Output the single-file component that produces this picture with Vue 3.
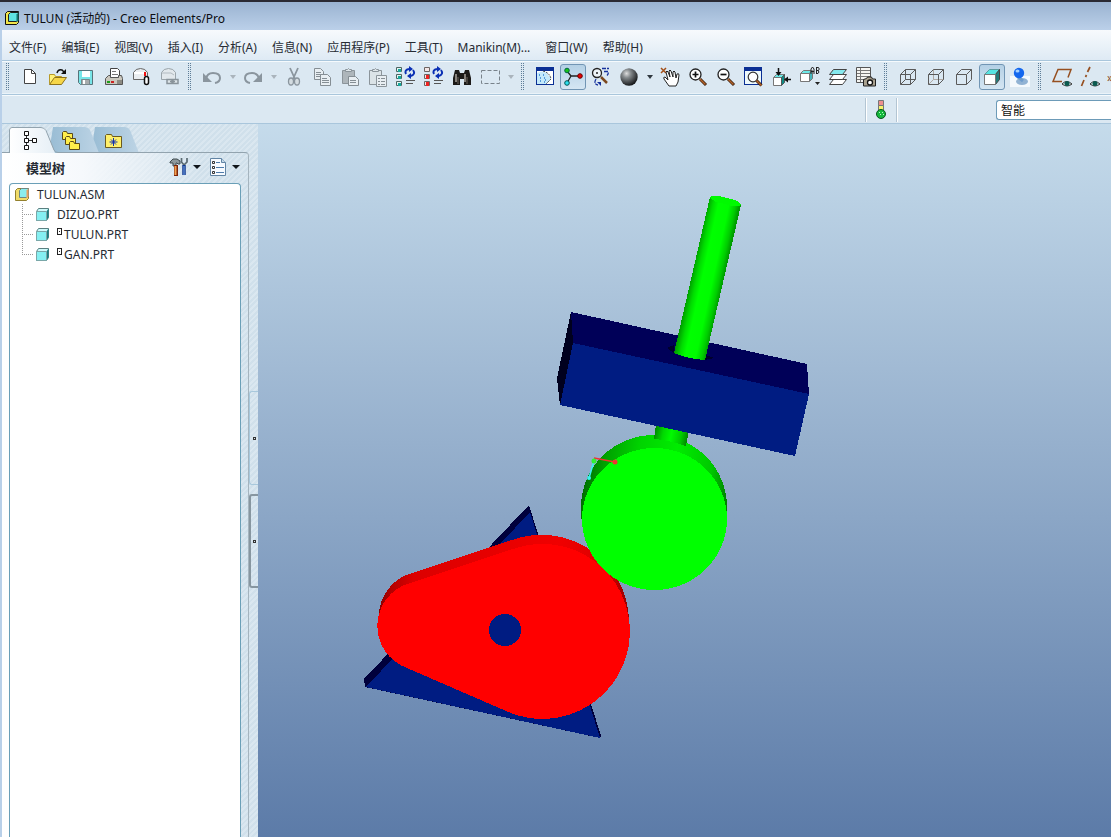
<script setup>
import { ref } from 'vue'

const menus = ['文件(F)', '编辑(E)', '视图(V)', '插入(I)', '分析(A)', '信息(N)', '应用程序(P)', '工具(T)', 'Manikin(M)...', '窗口(W)', '帮助(H)']

const cubeEdges = '<path d="M2.5 7.5h10v10h-10zM7.5 2.5h10v10M2.5 7.5l5-5M12.5 7.5l5-5M12.5 17.5l5-5" fill="none" stroke="#5a5a5a"/>'
const lens = '<circle cx="7.5" cy="7.5" r="5.5" fill="#fff" stroke="#222" stroke-width="1.3"/><path d="M12 12l6 6" stroke="#3a1c08" stroke-width="3"/><path d="M12 12l5.500 5.500" stroke="#b4642c" stroke-width="1.500"/>'
const eye = '<path d="M10 17q4.500-5 10 0q-5 4-10 0z" fill="#d8e8e8" stroke="#333"/><circle cx="15" cy="16.500" r="2.500" fill="#0c5a50"/>'
const regenArrows = '<path d="M10 7q-2-4 3-5M17 3q3 4-2 6" fill="none" stroke="#0a2fb4" stroke-width="2"/><path d="M13-1v6l4-3zM15 6v6l-4-3z" fill="#0a2fb4"/><path d="M10 13.500h9M10 16.500h7" stroke="#555"/>'
const clip = '<path d="M2.500 3.500h12v13h-12z" fill="#aeb6bb" stroke="#8b949a"/><path d="M5.500 4.500v-2h2q1-2 2 0h2v2z" fill="#dfe6ea" stroke="#8b949a"/>'

const icons = {
  new: '<path d="M4.500 2.500h7l4 4v10h-11z" fill="#fff" stroke="#444"/><path d="M11.500 2.500v4h4" fill="none" stroke="#444"/>',
  open: '<path d="M1.500 16.500v-9h5l1 2h6v7z" fill="#fff27a" stroke="#b89a28"/><path d="M1.500 17.500l5-7h12l-5 7z" fill="#f6d648" stroke="#8d721b"/><path d="M9 6q1-4 5-3l2 2" fill="none" stroke="#111" stroke-width="1.500"/><path d="M18 2v5h-5z" fill="#111"/>',
  save: '<path d="M2.500 3.500h14v14h-12l-2-2z" fill="#78e5e8" stroke="#56737a"/><path d="M6 4h8v6h-8z" fill="#fff"/><path d="M5.500 12.500h8v5h-8z" fill="#a7abac" stroke="#78888c"/><path d="M7 13h2v4h-2z" fill="#fff"/>',
  print: '<path d="M6.500 10.500v-9h7l2 2v7z" fill="#fff" stroke="#444"/><path d="M8 4.500h4M8 7.500h6" stroke="#777"/><path d="M1.500 11.500l3-3h2v2h8v-2h3l1 3v6h-17z" fill="#cac7bd" stroke="#555"/><path d="M3 15h3" stroke="#1ca01c" stroke-width="2"/><path d="M7 15h3" stroke="#c22" stroke-width="2"/><path d="M13 13h5v4h-5z" fill="#8c8a82"/>',
  mail: '<path d="M1.500 12.500v-7q2-4 7-4q5 0 7 4v7z" fill="#e9edf0" stroke="#666"/><path d="M2 6h12" stroke="#fff" stroke-width="2"/><path d="M13 5v4" stroke="#e11" stroke-width="2"/><rect x="12.500" y="9.500" width="4" height="8" rx="2" fill="#fff" stroke="#111" stroke-width="1.500"/>',
  link: '<path d="M1.500 12.500v-7q2-4 7-4q5 0 7 4v7z" fill="#e2e8ec" stroke="#9aa4aa"/><path d="M2 6h9l3 2" fill="none" stroke="#b2bac0"/><path d="M7 12.500h5v4h-5zM13 12.500h5v4h-5zM10 14.500h5" fill="#dde4e8" stroke="#89939a" stroke-width="1.500"/>',
  undo: '<path d="M4 12q1-6 7-6q7 0 7 5q0 4-5 5" fill="none" stroke="#8a959e" stroke-width="2"/><path d="M1 6v9h9z" fill="#8a959e"/>',
  redo: '<path d="M16 12q-1-6-7-6q-7 0-7 5q0 4 5 5" fill="none" stroke="#8a959e" stroke-width="2"/><path d="M19 6v9h-9z" fill="#8a959e"/>',
  cut: '<path d="M6 1l5 11M14 1l-5 11" stroke="#8a959e" stroke-width="1.800"/><ellipse cx="7" cy="14.500" rx="2.500" ry="3.500" fill="#d4dce1" stroke="#8a959e" stroke-width="1.300"/><ellipse cx="13" cy="14.500" rx="2.500" ry="3.500" fill="#d4dce1" stroke="#8a959e" stroke-width="1.300"/>',
  copy: '<path d="M2.500 1.500h6l3 3v8h-9z" fill="#e8eef2" stroke="#858e94"/><path d="M4 5.500h5M4 7.500h5M4 9.500h4" stroke="#858e94"/><path d="M8.500 7.500h7l3 3v8h-10z" fill="#e8eef2" stroke="#858e94"/><path d="M10 11.500h5M10 13.500h7M10 15.500h7" stroke="#858e94"/>',
  paste: clip + '<path d="M8.500 9.500h7l3 3v6h-10z" fill="#e8eef2" stroke="#858e94"/><path d="M10 13.500h6M10 15.500h6" stroke="#858e94"/>',
  pasteSpecial: '<path d="M1.500 3.500h12v14h-12z" fill="#dbe3e7" stroke="#8b949a"/><path d="M4.500 4.500v-2h2q1-2 2 0h2v2z" fill="#dfe6ea" stroke="#8b949a"/><path d="M8.500 8.500h10v11h-10z" fill="#e8eef2" stroke="#8b949a"/><path d="M10 11.500h2M10 14.500h2M10 17.500h2M13 11.500h4M13 14.500h4M13 17.500h4" stroke="#858e94"/>',
  regen: '<path d="M.5.500h5v4h-5zM.5 7.500h5v4h-5zM.5 14.500h5v4h-5z" fill="#e5f4f2" stroke="#4c6462"/><path d="M2 2h3v3h-3zM2 9h3v3h-3zM2 16h3v3h-3z" fill="#16a79b"/>' + regenArrows,
  regenRed: '<path d="M.5.500h5v4h-5zM.5 7.500h5v4h-5zM.5 14.500h5v4h-5z" fill="#f4e5e5" stroke="#6c6462"/><path d="M2 8h3v4h-3zM2 15h3v4h-3z" fill="#e22"/>' + regenArrows,
  find: '<path d="M3 3h4l1 3h4l1-3h4l2 8v7h-7v-6h-4v6h-7v-7z" fill="#1c1a18"/><path d="M4 7v8M13 7v8" stroke="#a8a29a" stroke-width="1.500"/><path d="M6 10v7M15 10v7" stroke="#6d655c"/>',
  box: '<rect x="1.500" y="3.500" width="18" height="13" fill="none" stroke="#78828a" stroke-dasharray="4 2"/>',
  repaint: '<path d="M1 0h18v18h-18z" fill="#0b2f94"/><path d="M2 4h16v13h-16z" fill="#fff"/><path d="M2 6q6-3 10 0l4 6-5 5h-9z" fill="#c4e9fb"/><path d="M4 8h1m3 0h1m-4 3h1m3 0h1m-5 3h1m4-1h1m-2 2h1" stroke="#2f80d0" stroke-width="1.300"/><path d="M8 4q7 2 8 8l-5 5" fill="none" stroke="#444" stroke-dasharray="2 1"/>',
  csys: '<path d="M4 4l4 5h9M8 9l-4 7" fill="none" stroke="#222" stroke-width="1.300"/><circle cx="4" cy="3.500" r="2.300" fill="#18c218" stroke="#064"/><circle cx="17" cy="9" r="2.300" fill="#e80000" stroke="#600"/><circle cx="4" cy="16" r="2.300" fill="#2ee0ee" stroke="#055"/>',
  orient: '<circle cx="6" cy="6" r="4.500" fill="#eef4f8" stroke="#222" stroke-width="1.300"/><circle cx="6" cy="6" r="1" fill="#222"/><path d="M10 10l6 6" stroke="#7d4a20" stroke-width="2.500"/><path d="M11 1.500h7M13 4.500h4q1 2-1 4M5 12q-3 5 2 6" fill="none" stroke="#15309c" stroke-width="1.300" stroke-dasharray="4 1"/><path d="M6 15h4v4z" fill="#15309c"/>',
  ball: '<defs><radialGradient id="ballShade" cx=".36" cy=".3" r=".7"><stop offset="0" stop-color="#ddd"/><stop offset=".35" stop-color="#858a8d"/><stop offset="1" stop-color="#191b1d"/></radialGradient></defs><circle cx="10" cy="10" r="8.700" fill="url(#ballShade)"/>',
  hand: '<path d="M1 1l5 5M6 1l-5 5" stroke="#a34f18" stroke-width="1.500"/><path d="M9 19l-5-7q-1-2 1-2l3 3-2-8q1-2 2 0l2 5-1-6q1-2 2 0l2 6v-5q1-2 2 0l1 6 1-4q2-1 2 1l-1 7-2 4z" fill="#fff" stroke="#222"/>',
  zoomIn: lens + '<path d="M7.500 4.500v6M4.500 7.500h6" stroke="#111" stroke-width="1.700"/>',
  zoomOut: lens + '<path d="M4.500 7.500h6" stroke="#111" stroke-width="1.700"/>',
  refit: '<path d="M0 0h18v18h-18z" fill="#0b2f94"/><path d="M1 4h16v13h-16z" fill="#eef9fb"/><circle cx="9" cy="10" r="4.800" fill="#fff" stroke="#333" stroke-width="1.200"/><path d="M12.500 13.500l5 5" stroke="#3a1c08" stroke-width="3"/><path d="M12.500 13.500l5 5" stroke="#b4642c" stroke-width="1.500"/>',
  reorient: '<path d="M1.500 10.500l3-3h8l-3 3z" fill="#6ce9e8" stroke="#777"/><path d="M1.500 10.500h8v8h-8z" fill="#fff" stroke="#777"/><path d="M9.500 10.500l3-3v8l-3 3z" fill="#0d8b85" stroke="#555"/><path d="M6.500 1v6M13 12.500h6" stroke="#111" stroke-width="1.500"/><path d="M3.500 5h6l-3 4zM16 9.500v6l-4-3z" fill="#111"/>',
  views: '<path d="M.5 6.500l3-3h8l-2 3z" fill="#6ce9e8" stroke="#777"/><path d="M.5 6.500h9v8h-9z" fill="#fff" stroke="#777"/><path d="M9.500 6.500l3-3v8l-3 3z" fill="#47b7bd" stroke="#777"/><path d="M11 7v-5l1.500-2 1.500 2v5M11 4.500h3M16.500 0v7M16.500.5h2q1.500 1.500 0 3h-2M18 3.500q2 1.500 0 3h-2" fill="none" stroke="#222"/><path d="M15 15h5l-2.500 3z" fill="#222"/>',
  layers: '<path d="M1.500 17.500l4-5h13l-4 5z" fill="#fff" stroke="#444"/><path d="M1.500 12.500l4-5h13l-4 5z" fill="#fff" stroke="#444"/><path d="M1.500 7.500l4-5h13l-4 5z" fill="#85e9ee" stroke="#444"/>',
  viewMgr: '<path d="M.5.500h14v15h-14z" fill="#f5f5f2" stroke="#555"/><path d="M1 3.500h13M1 6.500h13M1 9.500h13M1 12.500h13M4.500 1v14" stroke="#777"/><path d="M7.500 12.500l3-1 1-1.500h4l1 2h3v7h-12z" fill="#aaa290" stroke="#222"/><circle cx="14" cy="15.500" r="2.500" fill="#fff" stroke="#111" stroke-width="1.300"/>',
  wire: cubeEdges + '<path d="M7.500 2.500v10h10M7.500 12.500l-5 5" fill="none" stroke="#5a5a5a"/>',
  hidden: '<path d="M7.500 2.500v10h10M7.500 12.500l-5 5" fill="none" stroke="#b0aaa5"/>' + cubeEdges,
  noHidden: cubeEdges,
  shaded: '<path d="M2.500 7.500l5-5h10l-4 5z" fill="#57e4e2" stroke="#5d9da0"/><path d="M13.500 7.500l4-5v10l-4 5z" fill="#237b78" stroke="#444"/><path d="M2.500 7.500h11v10h-11z" fill="#fff" stroke="#777"/>',
  real: '<path d="M0 9h20v11h-20z" fill="#f4f9fd"/><ellipse cx="12" cy="14.500" rx="6" ry="3.500" fill="#92b3d4"/><path d="M8 10l5 4" stroke="#6f9ccc" stroke-width="3"/><circle cx="9" cy="6" r="5.200" fill="#1467ee"/><ellipse cx="7.500" cy="4" rx="2" ry="1.500" fill="#a4d0ff"/>',
  plane: '<path d="M10 14.500h-9l5-12h13l-3 8" fill="none" stroke="#964f20" stroke-width="1.500"/>' + eye,
  axis: '<path d="M10 0l-2.500 5M6.500 8l-1 2M4 13l-2.500 6" stroke="#964f20" stroke-width="1.700"/>' + eye
}

const groups = [
  [['new', '新建'], ['open', '打开'], ['save', '保存'], ['print', '打印'], ['mail', '发送附件'], ['link', '发送链接', 1]],
  [['undo', '撤消', 1, 1], ['redo', '重做', 1, 1], ['cut', '剪切', 1], ['copy', '复制', 1], ['paste', '粘贴', 1], ['pasteSpecial', '选择性粘贴', 1], ['regen', '再生'], ['regenRed', '再生管理器'], ['find', '查找'], ['box', '选取框', 0, 1]],
  [['repaint', '重画'], ['csys', '旋转中心', 0, 0, 1], ['orient', '定向模式'], ['ball', '外观库', 0, 2], ['hand', '平移'], ['zoomIn', '放大'], ['zoomOut', '缩小'], ['refit', '重新调整'], ['reorient', '重定向'], ['views', '已保存视图'], ['layers', '层'], ['viewMgr', '视图管理器']],
  [['wire', '线框'], ['hidden', '隐藏线'], ['noHidden', '消隐'], ['shaded', '着色', 0, 0, 1], ['real', '增强真实感']],
  [['plane', '平面显示'], ['axis', '轴显示']]
]

const parts = [
  { name: 'DIZUO.PRT', packed: false },
  { name: 'TULUN.PRT', packed: true },
  { name: 'GAN.PRT', packed: true }
]
const filter = ref('智能')
</script>

<template>
  <div class="window">
    <header class="title-bar">
      <svg width="16" height="16" viewBox="0 0 16 16" aria-hidden="true">
        <path d="M1.500 3.500l2-2h11v11l-2 2h-11z" fill="#f3e64a" stroke="#111" />
        <path d="M4.500 4.500l2-2h8v7l-2 2h-8z" fill="#5fe3e3" stroke="#222" />
        <path d="M12.500 4.500l2-2v8l-2 2z" fill="#15736f" />
      </svg>
      <h1>TULUN (活动的) - Creo Elements/Pro</h1>
    </header>

    <div class="frame">
      <nav class="menu">
        <button v-for="m in menus" :key="m" type="button">{{ m }}</button>
      </nav>

      <div class="toolbar" role="toolbar" aria-label="工具栏">
        <template v-for="(group, g) in groups" :key="g">
          <span class="grip"></span>
          <template v-for="[id, label, off, drop, on] in group" :key="id">
            <button class="tool" :class="{ pressed: on }" type="button" :aria-label="label" :aria-pressed="!!on" :disabled="!!off">
              <svg width="20" height="20" viewBox="0 0 20 20" v-html="icons[id]"></svg>
            </button>
            <button v-if="drop" class="drop" :class="{ dark: drop === 2 }" type="button" :aria-label="label + '选项'"></button>
          </template>
        </template>
        <button class="more" type="button" aria-label="更多">»</button>
      </div>

      <div class="status">
        <span class="light">
          <svg width="12" height="20" viewBox="0 0 12 20" aria-hidden="true">
            <path d="M3.500.5h5v6h-5z" fill="#ee8f8f" stroke="#777" />
            <path d="M3.500 5.500h5v5h-5z" fill="#f8f26a" stroke="#777" />
            <circle cx="6" cy="14" r="4.500" fill="#14b83c" stroke="#0a5420" />
            <path d="M4 12.500h1m2 0h1m-3 2h1m2 0h1" stroke="#baf5c6" />
          </svg>
        </span>
        <select v-model="filter" aria-label="选取过滤器">
          <option>智能</option>
        </select>
      </div>

      <main class="work">
        <aside class="side">
          <div class="tabs">
            <svg class="tab-shapes" width="140" height="26" viewBox="0 0 140 26" aria-hidden="true">
              <defs>
                <linearGradient id="tabBlue" x1="0" y1="0" x2="1" y2="0">
                  <stop offset="0" stop-color="#98bcd4" />
                  <stop offset="1" stop-color="#bdd4e5" />
                </linearGradient>
                <linearGradient id="tabWhite" x1="0" y1="0" x2="1" y2="0">
                  <stop offset="0" stop-color="#ffffff" />
                  <stop offset="1" stop-color="#e6eff6" />
                </linearGradient>
              </defs>
              <path d="M82 26L86 0h30q3 0 5 3l9 23z" fill="url(#tabBlue)" />
              <path d="M40 26L44 0h32q3 0 5 3l9 23z" fill="url(#tabBlue)" />
              <path d="M0 26V3q0-3 3-3h29q3 0 5 3l9 23z" fill="url(#tabWhite)" />
              <path d="M.5 26V3q0-2.500 2.500-2.500h29q3 0 5 3L45 23q1 2.500 4 2.500h91" fill="none" stroke="#92a3ae" />
            </svg>
            <button type="button" aria-label="模型树">
              <svg width="20" height="20" viewBox="0 0 20 20"><path d="M5.500 1.500h4v4h-4zM5.500 8.500h4v4h-4zM5.500 15.500h4v4h-4zM13.500 8.500h4v4h-4z" fill="#fff" stroke="#111" /><path d="M7.500 6v2M7.500 13v2M10 10.500h3" stroke="#333" /></svg>
            </button>
            <button type="button" aria-label="文件夹浏览器">
              <svg width="20" height="20" viewBox="0 0 20 20"><g fill="#ffee4a" stroke="#5a4a18"><path d="M1.500 2.500l1-1h3l1 2h5v6h-10z" /><path d="M4.500 7.500l1-1h3l1 2h5v6h-10z" /><path d="M8.500 12.500l1-1h3l1 2h5v6h-10z" /></g></svg>
            </button>
            <button type="button" aria-label="收藏夹">
              <svg width="20" height="20" viewBox="0 0 20 20"><path d="M2.500 5.500l1-1h5l1 2h9v11h-16z" fill="#fff06a" stroke="#6b5a20" /><path d="M10.500 8v8M6.500 12h8M8 9.500l5 5M13 9.500l-5 5" stroke="#1030b0" /></svg>
            </button>
          </div>

          <section class="panel">
            <div class="panel-head">
              <h2>模型树</h2>
              <button class="wide" type="button" aria-label="设置">
                <svg width="20" height="20" viewBox="0 0 20 20">
                  <path d="M1 5l3-3h4l3 2v3h-2l-1-1h-1v3h-3v-3h-3z" fill="#8d989c" stroke="#3f4a4e" />
                  <path d="M7 8v11" stroke="#7c240a" stroke-width="4" /><path d="M6.500 9v9" stroke="#f3a050" stroke-width="2" />
                  <path d="M12.500 1v4l2.500 3 3-3v-4" fill="none" stroke="#5a6a72" stroke-width="1.700" />
                  <path d="M15 8v10" stroke="#12398e" stroke-width="3.500" /><path d="M15 9v9" stroke="#79a9ea" />
                </svg>
                <i class="caret"></i>
              </button>
              <button class="wide" type="button" aria-label="显示">
                <svg width="20" height="20" viewBox="0 0 20 20">
                  <path d="M2.500 1.500h11l4 4v13h-15z" fill="#f6faff" stroke="#6184a4" /><path d="M13.500 1.500v4h4" fill="#c5daea" stroke="#6184a4" />
                  <path d="M4.500 4.500h2v2h-2zM4.500 9.500h2v2h-2zM4.500 14.500h2v2h-2z" fill="none" stroke="#333" /><path d="M8 5.500h4M8 10.500h8M8 15.500h8" stroke="#4f7cab" />
                </svg>
                <i class="caret"></i>
              </button>
            </div>

            <div class="tree">
              <div class="node root">
                <svg width="16" height="16" viewBox="0 0 16 16"><path d="M1.500 4.500l2-2h11v10l-2 2h-11z" fill="#f1dc68" stroke="#93802d" /><path d="M5.500 4.500l2-2h7v7l-2 2h-7z" fill="#8aeded" stroke="#6d8785" /><path d="M12.500 4.500l2-2v8l-2 2z" fill="#e9a060" /></svg>
                <span>TULUN.ASM</span>
              </div>
              <ul>
                <li v-for="p in parts" :key="p.name" class="node">
                  <svg width="16" height="16" viewBox="0 0 16 16"><path d="M2.500 5.500l2-3h10v9l-2 3h-10z" fill="#cffafb" stroke="#597f80" /><path d="M12.500 5.500l2-3v9l-2 3z" fill="#167f80" /><path d="M2.500 5.500h10v9h-10z" fill="#85f0f2" stroke="#7aa7a8" /></svg>
                  <i v-if="p.packed" class="packed"></i>
                  <span>{{ p.name }}</span>
                </li>
              </ul>
            </div>
          </section>
          <div class="sash">
            <button type="button" aria-label="折叠导航器"></button>
            <button class="raised" type="button" aria-label="展开浏览器"></button>
          </div>
        </aside>

        <section class="canvas">
          <svg viewBox="258 124 853 713" role="img" aria-label="凸轮机构模型">
            <defs>
              <linearGradient id="rod" gradientUnits="userSpaceOnUse" x1="674" y1="352" x2="706" y2="359">
                <stop offset="0" stop-color="#009600" /><stop offset=".2" stop-color="#00dc00" /><stop offset=".36" stop-color="#00ff00" />
                <stop offset=".68" stop-color="#00fc00" /><stop offset=".88" stop-color="#00cc00" /><stop offset="1" stop-color="#009c00" />
              </linearGradient>
              <linearGradient id="neck" gradientUnits="userSpaceOnUse" x1="655" y1="432" x2="687" y2="439">
                <stop offset="0" stop-color="#008c00" /><stop offset=".25" stop-color="#00d800" /><stop offset=".5" stop-color="#00fa00" />
                <stop offset=".8" stop-color="#00cc00" /><stop offset="1" stop-color="#008c00" />
              </linearGradient>
              <linearGradient id="rim" gradientUnits="userSpaceOnUse" x1="581" y1="500" x2="727" y2="520">
                <stop offset="0" stop-color="#006e00" /><stop offset=".12" stop-color="#00a000" /><stop offset=".35" stop-color="#00d400" />
                <stop offset=".6" stop-color="#00ec00" /><stop offset=".85" stop-color="#00c800" /><stop offset="1" stop-color="#007800" />
              </linearGradient>
              <linearGradient id="camRim" gradientUnits="userSpaceOnUse" x1="379" y1="615" x2="630" y2="615">
                <stop offset="0" stop-color="#8a0000" /><stop offset=".05" stop-color="#b40000" /><stop offset=".14" stop-color="#dc0000" />
                <stop offset=".5" stop-color="#e80000" /><stop offset=".72" stop-color="#f00000" /><stop offset=".9" stop-color="#dc0000" /><stop offset="1" stop-color="#900000" />
              </linearGradient>
            </defs>

            <g shape-rendering="crispEdges">
              <path d="M529 505L364 679L365 687L600 738L601 736L538 534z" fill="#00003c" />
              <path d="M530 512L366 687L600 738z" fill="#001c82" />
              <path d="M409 574L512 540A87.500 87.500 0 0 1 629 619L630 631L541 640L380 626L379 616A44.600 44.600 0 0 1 409 574z" fill="url(#camRim)" />
              <path d="M410 583L513 549A87.500 87.500 0 1 1 506 711L407 668A44.600 44.600 0 0 1 410 583z" fill="#ff0000" />
              <circle cx="505" cy="630" r="16" fill="#001c82" />

              <path d="M581 519V507A73 72 0 0 1 727 507V519z" fill="url(#rim)" />
              <ellipse cx="654.500" cy="519" rx="72.500" ry="71" fill="#00ff00" />
              <path d="M656 424L654 439Q669 440 686 446L689 430z" fill="url(#neck)" />

              <path d="M571 312L807 364L809 394L573 343z" fill="#000058" />
              <path d="M571 312L573 343L560 405L557 378z" fill="#00001e" />
              <path d="M573 343L809 394L795 456L560 405z" fill="#001c82" />
              <path d="M667 348L674 345V353zM706 355L714 358L705 360z" fill="#00002c" />
              <path d="M710 197L741 205L705 360Q688 359 674 353z" fill="url(#rod)" />
              <path d="M710 197Q714 194 727 198Q741 201 741 205Q736 208 725 204Q712 202 710 197z" fill="#00fa00" />
            </g>

            <path d="M594 461L589 478" stroke="#3cf0f0" stroke-width="1.500" />
            <circle cx="589" cy="478" r="2" fill="#3cf0f0" />
            <path d="M594 458L615 462" stroke="#f03232" stroke-width="1.500" />
            <circle cx="615" cy="462" r="2.500" fill="#f03232" />
            <circle cx="594" cy="461" r="2.500" fill="#32f032" />
          </svg>
        </section>
      </main>
    </div>
  </div>
</template>

<style>
html,
body {
  margin: 0;
  overflow: hidden;
}
</style>

<style scoped>
.window {
  box-sizing: border-box;
  display: flex;
  flex-direction: column;
  min-height: 100vh;
  border-top: 2px solid #2a2a33;
  background: #b9d0e9;
  color: #262b33;
  font-family: "Noto Sans", "Noto Sans CJK SC", sans-serif;
  font-size: 12px;
}
button {
  margin: 0;
  padding: 0;
  border: 0;
  background: none;
  color: inherit;
  font: inherit;
}
.title-bar {
  display: flex;
  align-items: center;
  gap: 4px;
  height: 28px;
  padding: 4px 4px 0;
  box-sizing: border-box;
  background: linear-gradient(#9ab3d1, #bbd0e9);
}
h1 {
  margin: 0;
  color: #0b0d12;
  font-size: 12px;
  font-weight: 400;
}
.frame {
  display: flex;
  flex: 1;
  flex-direction: column;
  margin-left: 2px;
  overflow: hidden;
}
.menu {
  display: flex;
  align-items: center;
  gap: 15px;
  height: 30px;
  padding: 4px 7px 0;
  box-sizing: border-box;
  background: linear-gradient(#f7fafd, #deeaf4);
  white-space: nowrap;
}
.toolbar {
  display: flex;
  align-items: flex-start;
  height: 35px;
  padding-top: 2px;
  box-sizing: border-box;
  border-top: 1px solid #a9c6dc;
  border-bottom: 1px solid #a9c6dc;
  background: #dbe8f2;
  box-shadow: inset 0 1px #f5fafd, inset 0 -1px #eaf3f9;
}
.grip {
  flex: none;
  width: 3px;
  height: 28px;
  margin: 0 7px 0 4px;
  background: repeating-linear-gradient(#5d7d98 0 1px, transparent 1px 2px) 0 0 / 1px 100% no-repeat,
    repeating-linear-gradient(#5d7d98 0 1px, transparent 1px 2px) 2px 0 / 1px 100% no-repeat;
}
.tool {
  display: flex;
  flex: none;
  align-items: center;
  justify-content: center;
  width: 28px;
  height: 28px;
}
.tool svg {
  flex: none;
  overflow: visible;
}
.pressed {
  width: 26px;
  height: 26px;
  margin: 1px;
  border: 1px solid #7195b4;
  border-radius: 3px;
  background: linear-gradient(#b4d0e5, #d5e6f3);
}
.drop {
  flex: none;
  width: 13px;
  height: 28px;
}
.drop::after,
.caret {
  display: block;
  width: 0;
  margin: 0 auto;
  border: 3px solid transparent;
  border-top: 4px solid #aab4bc;
  border-bottom: 0;
  content: "";
}
.drop.dark::after {
  border-top-color: #30383f;
}
.more {
  flex: none;
  height: 28px;
  margin-left: 3px;
  color: #8a4a1c;
}
.status {
  display: flex;
  align-items: center;
  justify-content: flex-end;
  height: 29px;
  padding-top: 2px;
  box-sizing: border-box;
  border-bottom: 1px solid #a9c6dc;
  background: #dbe8f2;
  box-shadow: inset 0 1px #f5fafd;
}
.light {
  display: flex;
  align-items: center;
  justify-content: center;
  width: 30px;
  height: 24px;
  margin-right: 99px;
  border: 1px solid #b3c5d3;
  border-width: 0 1px;
  box-shadow: 1px 0 #fff, inset 1px 0 #fff;
}
select {
  width: 115px;
  height: 20px;
  padding: 0 4px;
  border: 1px solid #6d9bb8;
  border-right: 0;
  border-radius: 3px 0 0 3px;
  appearance: none;
  background: #fff;
  color: #111;
  font: inherit;
}
.work {
  display: flex;
  flex: 1;
}
.side {
  display: grid;
  grid-template: 28px 1fr / 247px 9px;
  flex: none;
  background: repeating-linear-gradient(135deg, #d0e0eb 0 2px, #dae7f0 2px 4px);
}
.tabs {
  position: relative;
  display: flex;
  grid-column: 1 / 3;
  padding: 4px 0 0 6px;
}
.tab-shapes {
  position: absolute;
  top: 3px;
  left: 7px;
}
.tabs button {
  position: relative;
  width: 42px;
  height: 24px;
}
.tabs button svg {
  display: block;
  margin: 0 auto;
}
.panel {
  display: flex;
  flex-direction: column;
  padding: 0 7px;
  border-top: 1px solid #92a3ae;
  border-right: 1px solid #a5b4be;
  border-top-right-radius: 4px;
  background: linear-gradient(90deg, #fff 0, #f6f9fc 80px, transparent 200px);
}
.panel-head {
  display: flex;
  align-items: center;
  height: 30px;
  padding-bottom: 2px;
  box-sizing: border-box;
}
h2 {
  flex: 1;
  margin: 0 0 0 17px;
  font-size: 13px;
  font-weight: 700;
}
.wide {
  display: flex;
  align-items: center;
  gap: 4px;
  margin-right: 1px;
  margin-left: 6px;
}
.caret {
  border-width: 4px 4px 0;
  border-top-color: #10151a;
}
.tree {
  flex: 1;
  padding: 0 4px;
  border: 1px solid #6a9fb7;
  border-bottom: 0;
  border-radius: 4px 4px 0 0;
  background: #fff;
}
.node {
  display: flex;
  align-items: center;
  height: 20px;
}
.node span {
  margin-left: 7px;
}
ul {
  margin: 0 0 0 8px;
  padding: 0;
  list-style: none;
}
li {
  position: relative;
}
li::before {
  width: 12px;
  height: 20px;
  background: repeating-linear-gradient(#999 0 1px, transparent 1px 2px) 0 0 / 1px 11px no-repeat,
    repeating-linear-gradient(90deg, #999 0 1px, transparent 1px 2px) 0 10px / 100% 1px no-repeat;
  content: "";
}
li:not(:last-child)::before {
  background-size: 1px 100%, 100% 1px;
}
.packed {
  width: 3px;
  height: 5px;
  margin: 0 0 6px 7px;
  border: 1px solid #222;
  background: linear-gradient(#222, #222) center / 1px 1px no-repeat #fff;
}
.node .packed + span {
  margin-left: 2px;
}
.sash {
  display: flex;
  flex-direction: column;
  gap: 9px;
  padding-top: 239px;
}
.sash button {
  width: 100%;
  height: 94px;
  border: 1px solid #a8c8dc;
  border-right: 0;
  border-radius: 3px 0 0 3px;
}
.sash button::after {
  display: block;
  width: 1px;
  height: 1px;
  margin: 0 auto;
  border: 1px solid #333;
  content: "";
}
.sash .raised {
  border: 2px solid #8796a0;
  border-right: 0;
}
.canvas {
  flex: 1;
  min-width: 0;
  background: linear-gradient(#c5dbeb, #5c7ba8);
}
.canvas svg {
  display: block;
  width: 100%;
  height: 100%;
}
</style>
